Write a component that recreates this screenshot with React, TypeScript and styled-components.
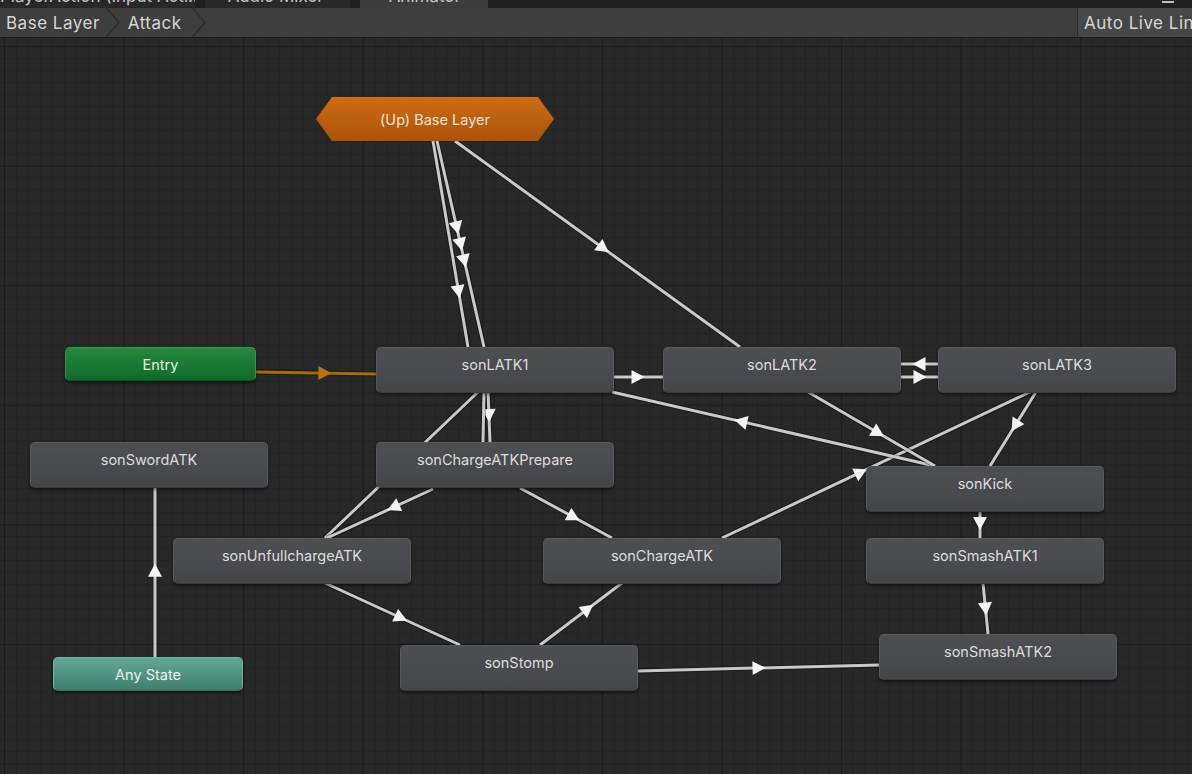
import React from 'react';
import styled, { createGlobalStyle, css } from 'styled-components';

const CANVAS_TOP = 38;

type Kind = 'state' | 'entry' | 'any';

interface StateData {
  name: string;
  x: number;
  y: number;
  w?: number;
  h?: number;
  kind?: Kind;
}

type Pt = [number, number];

interface Wire {
  from: Pt;
  to: Pt;
  arrows?: number[];
  entry?: boolean;
}

const states: StateData[] = [
  { name: 'Entry', x: 65, y: 347, w: 191, h: 34, kind: 'entry' },
  { name: 'Any State', x: 53, y: 657, w: 190, h: 34, kind: 'any' },
  { name: 'sonLATK1', x: 376, y: 347 },
  { name: 'sonLATK2', x: 663, y: 347 },
  { name: 'sonLATK3', x: 938, y: 347 },
  { name: 'sonSwordATK', x: 30, y: 442 },
  { name: 'sonChargeATKPrepare', x: 376, y: 442 },
  { name: 'sonKick', x: 866, y: 466 },
  { name: 'sonUnfullchargeATK', x: 173, y: 538 },
  { name: 'sonChargeATK', x: 543, y: 538 },
  { name: 'sonSmashATK1', x: 866, y: 538 },
  { name: 'sonStomp', x: 400, y: 645 },
  { name: 'sonSmashATK2', x: 879, y: 634 },
];

const wires: Wire[] = [
  { from: [256, 372], to: [376, 374], arrows: [0.57], entry: true },
  { from: [437, 141], to: [484, 347], arrows: [0.42, 0.5, 0.58] },
  { from: [433, 141], to: [468, 347], arrows: [0.73] },
  { from: [455, 141], to: [740, 347], arrows: [0.52] },
  { from: [614, 377], to: [663, 377], arrows: [0.48] },
  { from: [938, 364], to: [901, 364], arrows: [0.5] },
  { from: [901, 377], to: [938, 377], arrows: [0.5] },
  { from: [488, 392], to: [490, 442], arrows: [0.46] },
  { from: [484, 392], to: [483, 442] },
  { from: [478, 392], to: [325, 538] },
  { from: [433, 489], to: [327, 538], arrows: [0.37] },
  { from: [325, 583], to: [460, 645], arrows: [0.56] },
  { from: [520, 488], to: [612, 538], arrows: [0.58] },
  { from: [540, 645], to: [622, 583], arrows: [0.58] },
  { from: [722, 538], to: [1030, 392], arrows: [0.45] },
  { from: [935, 466], to: [612, 392], arrows: [0.6] },
  { from: [808, 392], to: [935, 466], arrows: [0.55] },
  { from: [1036, 392], to: [990, 466], arrows: [0.45] },
  { from: [980, 512], to: [980, 538], arrows: [0.42] },
  { from: [983, 583], to: [988, 634], arrows: [0.5] },
  { from: [638, 671], to: [879, 665], arrows: [0.5] },
  { from: [155, 657], to: [155, 488], arrows: [0.51] },
];

const arrowPoints = (w: Wire, t: number) => {
  const [x1, y1] = w.from;
  const [x2, y2] = w.to;
  const dx = x2 - x1;
  const dy = y2 - y1;
  const len = Math.hypot(dx, dy);
  const ux = dx / len;
  const uy = dy / len;
  const nx = -uy;
  const ny = ux;
  const cx = x1 + dx * t;
  const cy = y1 + dy * t;
  const pts = [
    [cx + ux * 7, cy + uy * 7],
    [cx - ux * 6 + nx * 7, cy - uy * 6 + ny * 7],
    [cx - ux * 6 - nx * 7, cy - uy * 6 - ny * 7],
  ];
  return pts.map(p => p.map(v => v.toFixed(1)).join(',')).join(' ');
};

const Chevron = () => (
  <ChevronSvg width={14} height={29} viewBox="0 0 14 29">
    <polyline points="0.5,0 13,14.5 0.5,29" fill="none" stroke="#2a2a2a" strokeWidth={1.2} />
  </ChevronSvg>
);

const App = () => {
  return (
    <>
      <GlobalStyle />
      <Window>
        <TabStrip>
          <Tab $width={195}>PlayerAction (Input Acti…</Tab>
          <Tab $width={145} $gap={10}>
            <TabIcon>ııı</TabIcon>Audio Mixer
          </Tab>
          <Tab $width={128} $gap={10} $active>
            <TabIcon>✓</TabIcon>Animator
          </Tab>
          <StripSpacer />
          <WindowIcon />
        </TabStrip>
        <Toolbar>
          <Crumbs>
            <Crumb $first>Base Layer</Crumb>
            <Chevron />
            <Crumb>Attack</Crumb>
            <Chevron />
          </Crumbs>
          <LiveLink>Auto Live Link</LiveLink>
        </Toolbar>
        <Canvas>
          <Wires
            width={1192}
            height={774 - CANVAS_TOP}
            viewBox={`0 ${CANVAS_TOP} 1192 ${774 - CANVAS_TOP}`}
          >
            {wires.map((w, i) => (
              <g key={i}>
                <line
                  x1={w.from[0]}
                  y1={w.from[1]}
                  x2={w.to[0]}
                  y2={w.to[1]}
                  stroke="rgba(0,0,0,0.35)"
                  strokeWidth={5}
                />
                <line
                  x1={w.from[0]}
                  y1={w.from[1]}
                  x2={w.to[0]}
                  y2={w.to[1]}
                  stroke={w.entry ? '#a8690c' : '#c9c9c9'}
                  strokeWidth={3}
                />
                {w.arrows?.map((t, j) => (
                  <polygon
                    key={j}
                    points={arrowPoints(w, t)}
                    fill={w.entry ? '#b8740c' : '#f4f4f4'}
                  />
                ))}
              </g>
            ))}
          </Wires>
          <LayerNode $x={316} $y={97}>
            (Up) Base Layer
          </LayerNode>
          {states.map(s => (
            <StateNode
              key={s.name}
              $x={s.x}
              $y={s.y}
              $w={s.w ?? 238}
              $h={s.h ?? 46}
              $kind={s.kind ?? 'state'}
            >
              {s.name}
            </StateNode>
          ))}
        </Canvas>
      </Window>
    </>
  );
};

export default App;

const GlobalStyle = createGlobalStyle`
  html, body {
    margin: 0;
    padding: 0;
    background: #282828;
    overflow: hidden;
  }
  * {
    box-sizing: border-box;
  }
`;

const Window = styled.div`
  display: flex;
  flex-direction: column;
  width: 1192px;
  height: 774px;
  font-family: Inter, 'Noto Sans', sans-serif;
  color: #d4d4d4;
  overflow: hidden;
`;

const TabStrip = styled.div`
  display: flex;
  height: 8px;
  background: #1f1f1f;
  overflow: hidden;
`;

const Tab = styled.div<{ $width: number; $gap?: number; $active?: boolean }>`
  display: flex;
  align-items: center;
  gap: 6px;
  flex: none;
  width: ${p => p.$width}px;
  height: 24px;
  margin-top: -16px;
  margin-left: ${p => p.$gap ?? 0}px;
  padding-left: ${p => (p.$active ? 4 : 0)}px;
  font-size: 17px;
  line-height: 24px;
  white-space: nowrap;
  overflow: hidden;
  color: #c4c4c4;
  background: ${p => (p.$active ? '#3c3c3c' : '#282828')};
`;

const TabIcon = styled.span`
  font-size: 12px;
  color: #b0b0b0;
  padding-left: 8px;
`;

const StripSpacer = styled.div`
  flex: 1;
`;

const WindowIcon = styled.div`
  width: 12px;
  height: 3px;
  margin: 0 18px 0 0;
  border-bottom: 2px solid #bdbdbd;
`;

const Toolbar = styled.div`
  display: flex;
  align-items: stretch;
  height: 30px;
  background: #3e3e3e;
  border-bottom: 1px solid #1c1c1c;
`;

const Crumbs = styled.div`
  display: flex;
  align-items: stretch;
  flex: 1;
`;

const Crumb = styled.div<{ $first?: boolean }>`
  display: flex;
  align-items: center;
  padding: 0 ${p => (p.$first ? 6 : 10)}px 0 ${p => (p.$first ? 6 : 8)}px;
  font-size: 17px;
  letter-spacing: 0.5px;
  color: #d6d6d6;
`;

const ChevronSvg = styled.svg`
  flex: none;
  align-self: center;
`;

const LiveLink = styled.div`
  display: flex;
  align-items: center;
  width: 115px;
  padding-left: 6px;
  font-size: 17px;
  letter-spacing: 0.5px;
  white-space: nowrap;
  overflow: hidden;
  color: #d6d6d6;
  background: #474747;
  border-left: 1px solid #2a2a2a;
`;

const Canvas = styled.div`
  position: relative;
  flex: 1;
  background-color: #282828;
  background-image: linear-gradient(to right, #1c1c1c 1px, transparent 1px),
    linear-gradient(to bottom, #1c1c1c 1px, transparent 1px),
    linear-gradient(to right, #232323 1px, transparent 1px),
    linear-gradient(to bottom, #232323 1px, transparent 1px);
  background-size: 119.6px 119.6px, 119.6px 119.6px, 11.96px 11.96px,
    11.96px 11.96px;
  background-position: 4px 8px, 4px 8px, 4px 8px, 4px 8px;
  overflow: hidden;
`;

const Wires = styled.svg`
  position: absolute;
  left: 0;
  top: 0;
`;

const LayerNode = styled.div<{ $x: number; $y: number }>`
  position: absolute;
  left: ${p => p.$x}px;
  top: ${p => p.$y - CANVAS_TOP}px;
  width: 238px;
  height: 44px;
  display: flex;
  align-items: center;
  justify-content: center;
  font-size: 14.5px;
  color: #f1e2d2;
  background: linear-gradient(#cf6e14, #a9520b);
  clip-path: polygon(
    16px 0,
    calc(100% - 16px) 0,
    100% 50%,
    calc(100% - 16px) 100%,
    16px 100%,
    0 50%
  );
`;

const kindStyles = {
  state: css`
    padding-top: 8px;
    line-height: 18px;
    color: #dcdcdc;
    background: linear-gradient(#4e4f52, #45464a);
    border: 1px solid #58595c;
    border-bottom-color: #3a3b3e;
  `,
  entry: css`
    display: flex;
    align-items: center;
    justify-content: center;
    color: #e4f1e6;
    background: linear-gradient(#24893d, #116a2a);
    border: 1px solid #2f9848;
    border-bottom-color: #0d5220;
  `,
  any: css`
    display: flex;
    align-items: center;
    justify-content: center;
    color: #eaf3f0;
    background: linear-gradient(#62a793, #3f7f6f);
    border: 1px solid #6fb29e;
    border-bottom-color: #34695b;
  `,
};

const StateNode = styled.div<{
  $x: number;
  $y: number;
  $w: number;
  $h: number;
  $kind: Kind;
}>`
  position: absolute;
  left: ${p => p.$x}px;
  top: ${p => p.$y - CANVAS_TOP}px;
  width: ${p => p.$w}px;
  height: ${p => p.$h}px;
  border-radius: 5px;
  font-size: 14.5px;
  text-align: center;
  box-shadow: 0 2px 3px rgba(0, 0, 0, 0.45);
  ${p => kindStyles[p.$kind]}
`;
